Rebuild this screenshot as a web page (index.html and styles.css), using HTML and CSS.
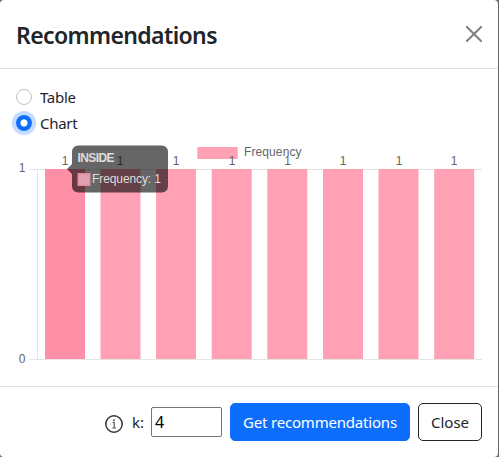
FILE: index.html
```html
<!DOCTYPE html>
<html lang="en">
<head>
<meta charset="utf-8">
<title>Recommendations</title>
<link rel="stylesheet" href="styles.css">
</head>
<body>
<div class="modal">
  <header class="modal-header">
    <h1 class="title">Recommendations</h1>
    <button class="close" aria-label="Close">
      <svg width="16" height="16" viewBox="0 0 16 16"><path d="M.7.7l14.6 14.6M15.3.7L.7 15.3" fill="none" stroke="#808080" stroke-width="2" stroke-linecap="round"/></svg>
    </button>
  </header>
  <main class="modal-body">
    <label class="option"><span class="radio"></span><span class="option-text">Table</span></label>
    <label class="option"><span class="radio checked"></span><span class="option-text">Chart</span></label>
    <svg class="chart" width="466" height="233" viewBox="16 137 466 233">
      <g fill="#e5e5e5">
        <rect x="29" y="169" width="453" height="1"/>
        <rect x="29" y="359" width="453" height="1"/>
        <rect x="37" y="169" width="1" height="190"/>
      </g>
      <g fill="#ffa1b4">
        <rect x="45" y="169" width="40" height="190" fill="#ff8fa6"/>
        <rect x="100.5" y="169" width="40" height="190"/>
        <rect x="156" y="169" width="40" height="190"/>
        <rect x="211.7" y="169" width="40" height="190"/>
        <rect x="267.3" y="169" width="40" height="190"/>
        <rect x="323" y="169" width="40" height="190"/>
        <rect x="378.5" y="169" width="40" height="190"/>
        <rect x="434.2" y="169" width="40" height="190"/>
        <rect x="197.3" y="147" width="40.4" height="12"/>
      </g>
      <g class="chart-text-style">
        <text x="244" y="156" textLength="57.5">Frequency</text>
        <text x="18.7" y="172">1</text>
        <text x="18.7" y="363">0</text>
        <g text-anchor="middle">
          <text x="65.2" y="165">1</text>
          <text x="120.2" y="165">1</text>
          <text x="176.2" y="165">1</text>
          <text x="232.2" y="165">1</text>
          <text x="287.7" y="165">1</text>
          <text x="343.2" y="165">1</text>
          <text x="399.2" y="165">1</text>
          <text x="454.2" y="165">1</text>
        </g>
      </g>
      <g class="tip">
        <path d="M78 145.500h84a6 6 0 0 1 6 6v35a6 6 0 0 1-6 6H78a6 6 0 0 1-6-6v-12.500l-5-5 5-5v-12.500a6 6 0 0 1 6-6z" fill="#000" fill-opacity=".6"/>
        <rect x="77.500" y="173" width="13" height="13" fill="#de8ea0"/>
        <rect x="79" y="174.500" width="10" height="10" fill="#e2a1b1"/>
        <text class="tip-title" x="77.500" y="162" textLength="37">INSIDE</text>
        <text class="tip-row" x="92" y="183" textLength="69">Frequency: 1</text>
      </g>
    </svg>
  </main>
  <footer class="modal-footer">
    <svg class="info" width="18" height="18" viewBox="0 0 18 18"><circle cx="9" cy="9" r="8.200" fill="none" stroke="#33373b" stroke-width="1.500"/><path d="M7.500 7.500h1.700v5.200M7.300 13h3.700" fill="none" stroke="#555" stroke-width="1.200"/><circle cx="9" cy="5.200" r="1" fill="#555"/></svg>
    <label class="k-label" for="k">k:</label>
    <input class="k-input" id="k" type="text" value="4">
    <button class="btn primary"><span>Get recommendations</span></button>
    <button class="btn outline"><span>Close</span></button>
  </footer>
</div>
</body>
</html>
```

FILE: styles.css
```css
* {
  box-sizing: border-box;
}

body {
  margin: 0;
  height: 457px;
  overflow: hidden;
  background: #666;
  color: #212529;
  font: 16px/24px "Noto Sans", "Open Sans", sans-serif;
}

.modal {
  width: 498px;
  height: 457px;
  background: #fff;
  border-radius: 4px;
}

.modal-header {
  display: flex;
  align-items: center;
  justify-content: space-between;
  height: 69px;
  padding: 0 16px;
  border-bottom: 1px solid #dee2e6;
}

.title {
  margin: 1px 0 0;
  font-size: 23px;
  line-height: 36px;
  font-weight: 600;
  letter-spacing: -0.62px;
}

.close {
  display: flex;
  padding: 0;
  border: 0;
  background: none;
}

.modal-body {
  height: 317px;
  padding: 16px 16px 0;
}

.option {
  display: flex;
  align-items: center;
  gap: 8px;
  height: 24px;
  margin-bottom: 2px;
}

.option-text {
  font-size: 15px;
  letter-spacing: -0.3px;
}

.radio {
  width: 16px;
  height: 16px;
  border: 1px solid #bfbfbf;
  border-radius: 50%;
}

.checked {
  border: 0;
  background: radial-gradient(circle, #fff 3.2px, #0d6efd 4px);
  box-shadow: 0 0 0 4px #c2dbfe;
}

.chart {
  display: block;
}

.chart-text-style {
  font: 12px "Liberation Sans", sans-serif;
  fill: #666;
}

.tip {
  font: 12px "Liberation Sans", sans-serif;
  fill: #ddd;
}

.tip-title {
  font-weight: 700;
}

.modal-footer {
  display: flex;
  align-items: center;
  justify-content: flex-end;
  height: 71px;
  padding: 0 16px;
  border-top: 1px solid #dee2e6;
}

.info {
  margin: 3px 9px 0 0;
}

.k-label {
  width: 19px;
  font-size: 15px;
}

.k-input {
  width: 71px;
  height: 30px;
  margin-right: 8px;
  padding: 1px 3px;
  border: 1px solid #767676;
  border-radius: 2px;
  background: #fff;
  color: #000;
  font: inherit;
}

.btn {
  height: 38px;
  padding: 0;
  border: 1px solid #212529;
  border-radius: 5px;
  background: #fff;
  color: #212529;
  font: inherit;
  font-size: 15px;
  white-space: nowrap;
}

.primary {
  width: 180px;
  margin-right: 8px;
  border-color: #0d6efd;
  background: #0d6efd;
  color: #fff;
  letter-spacing: -0.2px;
}

.outline {
  width: 64px;
}
```
